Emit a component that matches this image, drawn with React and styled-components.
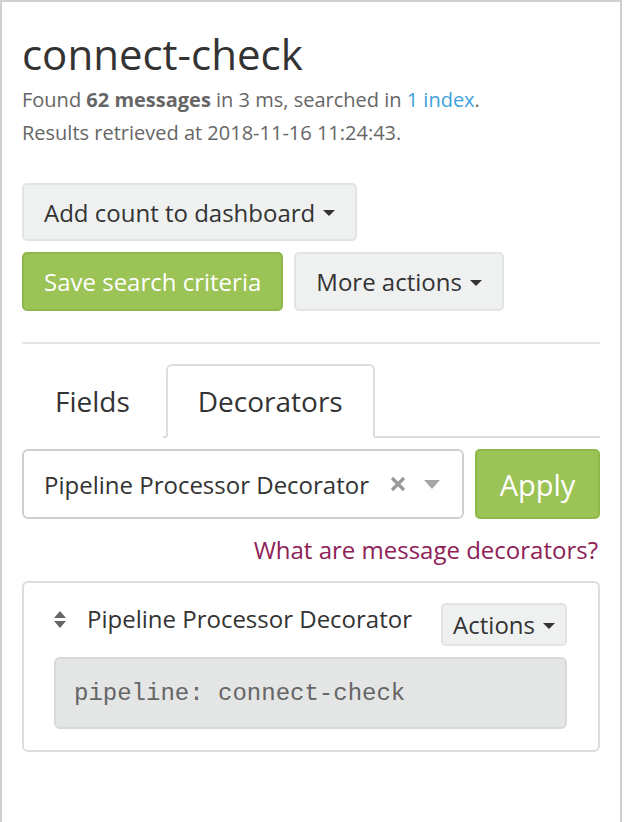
import React from "react";
import styled, { createGlobalStyle } from "styled-components";

const Global = createGlobalStyle`
  html, body { margin: 0; padding: 0; background: #fff; }
  body { font-family: "Open Sans", "Noto Sans", sans-serif; color: #333; }
  * { box-sizing: border-box; }
`;

const Panel = styled.div`
  width: 622px;
  min-height: 822px;
  border: 2px solid #d0d0d0;
  border-bottom: none;
  padding: 0 20px;
  background: #fff;
`;

const Title = styled.h1`
  margin: 29px 0 0;
  font-size: 42px;
  line-height: 46px;
  font-weight: 400;
  color: #333;
`;

const Info = styled.p`
  margin: 6px 0 0;
  font-size: 20px;
  line-height: 33px;
  color: #666;
  strong { font-weight: 700; }
`;

const BlueLink = styled.a`
  color: #3ea2dc;
  text-decoration: none;
`;

const ButtonStack = styled.div`
  margin-top: 34px;
  display: flex;
  flex-direction: column;
  gap: 11px;
`;

const Row = styled.div`
  display: flex;
  gap: 11px;
`;

const Button = styled.button`
  height: ${(p) => p.$h || 58}px;
  padding: 0 ${(p) => p.$px || 20}px;
  font-family: inherit;
  font-size: ${(p) => p.$fs || 24}px;
  color: ${(p) => (p.$primary ? "#fff" : "#333")};
  background: ${(p) => (p.$primary ? "#9bc355" : "#eff1f1")};
  border: 2px solid ${(p) => (p.$primary ? "#8eb84b" : "#e2e4e4")};
  border-radius: 5px;
  display: inline-flex;
  align-items: center;
  justify-content: center;
  gap: 8px;
  cursor: pointer;
  flex: ${(p) => (p.$grow ? "1 1 auto" : "none")};
  align-self: flex-start;
`;

const Caret = styled.span`
  display: inline-block;
  width: 0;
  height: 0;
  border-top: 6px solid currentColor;
  border-left: 6px solid transparent;
  border-right: 6px solid transparent;
  margin-top: 2px;
`;

const Divider = styled.hr`
  margin: 31px 0 0;
  border: none;
  border-top: 2px solid #e6e6e6;
`;

const TabList = styled.div`
  margin-top: 20px;
  display: flex;
  border-bottom: 2px solid #dedede;
  height: 74px;
`;

const Tab = styled.div`
  height: 74px;
  margin-bottom: -2px;
  padding: 0 ${(p) => (p.$active ? 30 : 31)}px;
  margin-right: 3px;
  display: flex;
  align-items: center;
  font-size: 28px;
  color: #333;
  border: 2px solid ${(p) => (p.$active ? "#dedede" : "transparent")};
  border-bottom-color: ${(p) => (p.$active ? "#fff" : "transparent")};
  border-radius: 6px 6px 0 0;
  background: #fff;
`;

const FormRow = styled.div`
  margin-top: 11px;
  display: flex;
  gap: 11px;
`;

const Select = styled.div`
  width: 442px;
  flex: none;
  height: 70px;
  border: 2px solid #cfcfcf;
  border-radius: 6px;
  display: flex;
  align-items: center;
  padding: 0 22px 0 20px;
  font-size: 24px;
  color: #333;
`;

const SelectValue = styled.span`
  flex: 1;
  white-space: nowrap;
`;

const SelectIcons = styled.span`
  display: flex;
  align-items: center;
  gap: 18px;
`;

const SelectCaret = styled.span`
  width: 0;
  height: 0;
  border-top: 9px solid #a6a6a6;
  border-left: 8px solid transparent;
  border-right: 8px solid transparent;
`;

const HelpRow = styled.div`
  margin-top: 14px;
  text-align: right;
  font-size: 24px;
  line-height: 34px;
  padding-right: 2px;
`;

const HelpLink = styled.a`
  color: #8e2157;
  text-decoration: none;
`;

const Card = styled.div`
  margin-top: 14px;
  border: 2px solid #dddddd;
  border-radius: 6px;
  padding: 20px 31px 21px 30px;
`;

const CardHeader = styled.div`
  display: flex;
  align-items: flex-start;
  justify-content: space-between;
`;

const CardTitle = styled.div`
  display: flex;
  align-items: center;
  gap: 21px;
  font-size: 24px;
  line-height: 32px;
  color: #333;
`;

const CodeBox = styled.pre`
  margin: 11px 0 0;
  height: 72px;
  background: #e4e5e5;
  border: 2px solid #d8d9d9;
  border-radius: 6px;
  padding: 0 18px;
  display: flex;
  align-items: center;
  font-family: "Liberation Mono", "Courier New", monospace;
  font-size: 24px;
  font-weight: 400;
  color: #666;
`;

const SortIcon = () => (
  <svg width="12" height="17" viewBox="0 0 12 17" aria-hidden="true">
    <path d="M6 0 L12 7 H0 Z" fill="#666" />
    <path d="M0 10 H12 L6 17 Z" fill="#666" />
  </svg>
);

const ClearIcon = () => (
  <svg width="16" height="16" viewBox="0 0 16 16" aria-hidden="true">
    <path d="M2 2 L14 14 M14 2 L2 14" stroke="#999" strokeWidth="3.2" strokeLinecap="butt" />
  </svg>
);

export default function App() {
  return (
    <>
      <Global />
      <Panel>
        <Title>connect-check</Title>
        <Info>
          Found <strong>62 messages</strong> in 3 ms, searched in{" "}
          <BlueLink href="#">1 index</BlueLink>.
          <br />
          Results retrieved at 2018-11-16 11:24:43.
        </Info>
        <ButtonStack>
          <Button>
            Add count to dashboard <Caret />
          </Button>
          <Row>
            <Button $primary $h={59}>Save search criteria</Button>
            <Button $h={59}>
              More actions <Caret />
            </Button>
          </Row>
        </ButtonStack>
        <Divider />
        <TabList>
          <Tab>Fields</Tab>
          <Tab $active>Decorators</Tab>
        </TabList>
        <FormRow>
          <Select>
            <SelectValue>Pipeline Processor Decorator</SelectValue>
            <SelectIcons>
              <ClearIcon />
              <SelectCaret />
            </SelectIcons>
          </Select>
          <Button $primary $grow $h={70} $px={10} $fs={29}>
            Apply
          </Button>
        </FormRow>
        <HelpRow>
          <HelpLink href="#">What are message decorators?</HelpLink>
        </HelpRow>
        <Card>
          <CardHeader>
            <CardTitle>
              <SortIcon />
              Pipeline Processor Decorator
            </CardTitle>
            <Button $h={43} $px={10} $fs={24}>
              Actions <Caret />
            </Button>
          </CardHeader>
          <CodeBox>pipeline: connect-check</CodeBox>
        </Card>
      </Panel>
    </>
  );
}
